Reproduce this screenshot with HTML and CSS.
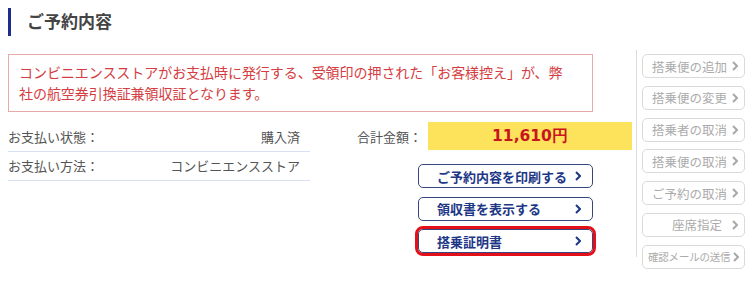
FILE: index.html
```html
<!DOCTYPE html>
<html lang="ja">
<head>
<meta charset="utf-8">
<link rel="stylesheet" href="styles.css">
</head>
<body>
<div class="page">
  <div class="header">
    <span class="bar"></span>
    <h1 class="title">ご予約内容</h1>
  </div>
  <div class="content">
    <div class="main">
      <div class="notice">コンビニエンスストアがお支払時に発行する、受領印の押された「お客様控え」が、弊<br>社の航空券引換証兼領収証となります。</div>
      <div class="details">
        <div class="paytable">
          <div class="row"><span class="label">お支払い状態：</span><span class="value">購入済</span></div>
          <div class="row"><span class="label">お支払い方法：</span><span class="value">コンビニエンスストア</span></div>
        </div>
        <div class="totalcol">
          <div class="total">
            <span class="total-label">合計金額：</span>
            <span class="total-amount">11,610円</span>
          </div>
          <div class="actions">
            <a class="btn">ご予約内容を印刷する<svg class="chev" viewBox="0 0 6 10"><polyline points="1,1 5,5 1,9"/></svg></a>
            <a class="btn">領収書を表示する<svg class="chev" viewBox="0 0 6 10"><polyline points="1,1 5,5 1,9"/></svg></a>
            <a class="btn btn-hl">搭乗証明書<svg class="chev" viewBox="0 0 6 10"><polyline points="1,1 5,5 1,9"/></svg></a>
          </div>
        </div>
      </div>
    </div>
    <div class="side">
      <div class="vline"></div>
      <div class="sidebtns">
        <a class="sbtn">搭乗便の追加<svg class="schev" viewBox="0 0 6 10"><polyline points="1,1 5,5 1,9"/></svg></a>
        <a class="sbtn">搭乗便の変更<svg class="schev" viewBox="0 0 6 10"><polyline points="1,1 5,5 1,9"/></svg></a>
        <a class="sbtn">搭乗者の取消<svg class="schev" viewBox="0 0 6 10"><polyline points="1,1 5,5 1,9"/></svg></a>
        <a class="sbtn">搭乗便の取消<svg class="schev" viewBox="0 0 6 10"><polyline points="1,1 5,5 1,9"/></svg></a>
        <a class="sbtn">ご予約の取消<svg class="schev" viewBox="0 0 6 10"><polyline points="1,1 5,5 1,9"/></svg></a>
        <a class="sbtn sbtn-center"><span class="stext">座席指定</span><svg class="schev" viewBox="0 0 6 10"><polyline points="1,1 5,5 1,9"/></svg></a>
        <a class="sbtn sbtn-small">確認メールの送信<svg class="schev" viewBox="0 0 6 10"><polyline points="1,1 5,5 1,9"/></svg></a>
      </div>
    </div>
  </div>
</div>
</body>
</html>
```
FILE: styles.css
```css
* { box-sizing: border-box; }
body {
  margin: 0;
  background: #fff;
  font-family: "Noto Sans CJK JP", "Noto Sans", sans-serif;
  color: #555;
}
.page { width: 755px; height: 283px; overflow: hidden; }
.header {
  display: flex;
  align-items: center;
  height: 50px;
  padding-left: 8px;
  padding-bottom: 12px;
}
.bar {
  width: 3px;
  height: 28px;
  background: #1e2d8a;
  margin-top: 5px;
}
.title {
  margin: 0 0 0 16px;
  padding-top: 3px;
  font-size: 17px;
  font-weight: bold;
  color: #444;
  line-height: 24px;
}
.content { display: flex; }
.main { width: 632px; flex-shrink: 0; padding-left: 8px; }
.notice {
  width: 585px;
  margin-top: 4px;
  border: 1px solid #e8a9ab;
  padding: 7px 10px;
  font-size: 14px;
  line-height: 21px;
  color: #d43d42;
  letter-spacing: -0.05px;
}
.details { display: flex; margin-top: 10px; }
.paytable { width: 302px; flex-shrink: 0; }
.row {
  display: flex;
  justify-content: space-between;
  align-items: center;
  height: 29.5px;
  border-bottom: 1px solid #d6e2f2;
  font-size: 13px;
  padding-right: 10px;
}
.label, .value { color: #555; }
.totalcol { margin-left: 47px; width: 275px; flex-shrink: 0; }
.total { display: flex; align-items: center; height: 28px; }
.total-label { font-size: 13px; color: #555; width: 71px; flex-shrink: 0; }
.total-amount {
  width: 204px;
  height: 28px;
  background: #fde25b;
  color: #c8151d;
  font-family: "DejaVu Sans", sans-serif;
  font-weight: bold;
  font-size: 15.5px;
  display: flex;
  align-items: center;
  justify-content: center;
}
.actions {
  display: flex;
  flex-direction: column;
  gap: 8.5px;
  padding-left: 61px;
  margin-top: 14px;
}
.btn {
  display: flex;
  align-items: center;
  justify-content: space-between;
  width: 175px;
  height: 24px;
  border: 1px solid #34467e;
  border-radius: 5px;
  padding: 0 11px 0 18px;
  font-size: 13px;
  font-weight: bold;
  color: #1d3786;
  text-decoration: none;
}
.btn-hl { outline: 3px solid #e3101a; outline-offset: 0; }
.chev { width: 6px; height: 10px; fill: none; stroke: #1d3786; stroke-width: 2; }
.side { display: flex; margin-left: 4px; flex-shrink: 0; }
.vline { width: 1px; height: 207px; background: #dcdcdc; }
.sidebtns {
  display: flex;
  flex-direction: column;
  gap: 7.8px;
  margin-left: 5px;
  margin-top: 4px;
}
.sbtn {
  display: flex;
  align-items: center;
  justify-content: space-between;
  width: 103px;
  height: 24px;
  border: 1px solid #dadada;
  border-radius: 5px;
  padding: 0 6px 0 9px;
  font-size: 12.5px;
  color: #ababab;
  text-decoration: none;
  white-space: nowrap;
}
.sbtn-center .stext { margin-left: 20px; }
.sbtn-small { font-size: 10.5px; padding: 0 5px 0 5px; letter-spacing: -0.2px; }
.schev { width: 6px; height: 10px; fill: none; stroke: #a8a8a8; stroke-width: 2; flex-shrink: 0; }
```
